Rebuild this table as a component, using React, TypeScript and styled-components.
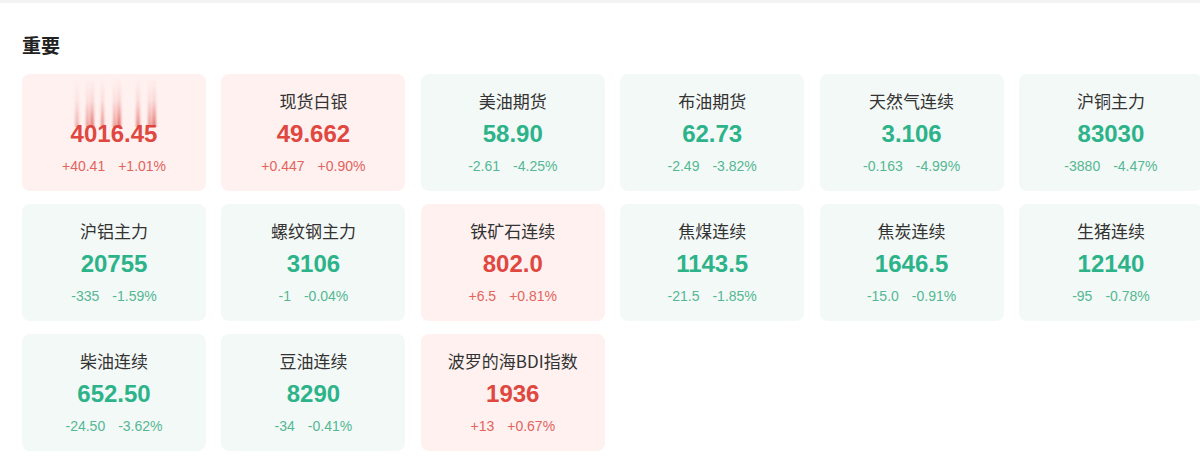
import React from "react";
import styled, { createGlobalStyle } from "styled-components";

const Global = createGlobalStyle`
  html, body { margin: 0; padding: 0; background: #fff; overflow: hidden; }
  body { font-family: "Liberation Sans", Arial, "Noto Sans CJK SC", sans-serif; }
`;

const Page = styled.div`
  width: 1200px;
  height: 462px;
  overflow: hidden;
  background: #fff;
`;

const TopBand = styled.div`
  height: 3px;
  background: #f3f3f3;
`;

const Section = styled.section`
  padding: 28px 0 0 22px;
`;

const Heading = styled.h2`
  margin: 0 0 15px;
  font-family: "Noto Sans CJK SC", sans-serif;
  font-size: 19px;
  line-height: 28px;
  font-weight: 700;
  color: #222;
`;

const Grid = styled.div`
  display: grid;
  grid-template-columns: repeat(6, 184px);
  column-gap: 15.4px;
  row-gap: 13px;
`;

const Card = styled.div<{ $up: boolean }>`
  position: relative;
  height: 117px;
  box-sizing: border-box;
  padding-top: 15px;
  border-radius: 8px;
  background: ${(p) => (p.$up ? "#fef1f0" : "#f3f9f6")};
  display: flex;
  flex-direction: column;
  align-items: center;
  overflow: hidden;
`;

const Name = styled.div<{ $hidden?: boolean }>`
  font-family: "Noto Sans CJK SC", sans-serif;
  font-size: 17px;
  line-height: 24px;
  color: #333;
  visibility: ${(p) => (p.$hidden ? "hidden" : "visible")};
`;

const Value = styled.div<{ $up: boolean }>`
  margin-top: 5px;
  font-family: "Liberation Sans", Arial, sans-serif;
  font-weight: 700;
  font-size: 24px;
  line-height: 32px;
  color: ${(p) => (p.$up ? "#e0473f" : "#2db38a")};
`;

const Change = styled.div<{ $up: boolean }>`
  margin-top: 5px;
  display: flex;
  gap: 13px;
  font-family: "Liberation Sans", Arial, sans-serif;
  font-size: 14px;
  line-height: 22px;
  color: ${(p) => (p.$up ? "#e2645d" : "#55b794")};
`;

const Rolling = styled.svg`
  position: absolute;
  left: 0;
  top: 0;
  pointer-events: none;
`;

type Item = { name: string; value: string; diff: string; pct: string; up: boolean };

const items: Item[] = [
  { name: "现货黄金", value: "4016.45", diff: "+40.41", pct: "+1.01%", up: true },
  { name: "现货白银", value: "49.662", diff: "+0.447", pct: "+0.90%", up: true },
  { name: "美油期货", value: "58.90", diff: "-2.61", pct: "-4.25%", up: false },
  { name: "布油期货", value: "62.73", diff: "-2.49", pct: "-3.82%", up: false },
  { name: "天然气连续", value: "3.106", diff: "-0.163", pct: "-4.99%", up: false },
  { name: "沪铜主力", value: "83030", diff: "-3880", pct: "-4.47%", up: false },
  { name: "沪铝主力", value: "20755", diff: "-335", pct: "-1.59%", up: false },
  { name: "螺纹钢主力", value: "3106", diff: "-1", pct: "-0.04%", up: false },
  { name: "铁矿石连续", value: "802.0", diff: "+6.5", pct: "+0.81%", up: true },
  { name: "焦煤连续", value: "1143.5", diff: "-21.5", pct: "-1.85%", up: false },
  { name: "焦炭连续", value: "1646.5", diff: "-15.0", pct: "-0.91%", up: false },
  { name: "生猪连续", value: "12140", diff: "-95", pct: "-0.78%", up: false },
  { name: "柴油连续", value: "652.50", diff: "-24.50", pct: "-3.62%", up: false },
  { name: "豆油连续", value: "8290", diff: "-34", pct: "-0.41%", up: false },
  { name: "波罗的海BDI指数", value: "1936", diff: "+13", pct: "+0.67%", up: true },
];

const stripes = [
  { x: 53, w: 4, o: 0.4 },
  { x: 64, w: 3, o: 0.6 },
  { x: 68, w: 4, o: 0.75 },
  { x: 79, w: 3, o: 0.65 },
  { x: 91, w: 3, o: 0.6 },
  { x: 95, w: 4, o: 0.8 },
  { x: 114, w: 4, o: 0.65 },
  { x: 126, w: 3, o: 0.65 },
  { x: 130, w: 4, o: 0.8 },
];

const RollingStripes = () => (
  <Rolling width="184" height="60" viewBox="0 0 184 60">
    <defs>
      <linearGradient id="roll" x1="0" y1="0" x2="0" y2="1">
        <stop offset="0" stopColor="#e0473f" stopOpacity="0" />
        <stop offset="0.45" stopColor="#e0473f" stopOpacity="0.2" />
        <stop offset="1" stopColor="#d8403a" stopOpacity="0.9" />
      </linearGradient>
      <filter id="blur" x="-60%" y="-10%" width="220%" height="120%">
        <feGaussianBlur stdDeviation="1 0.5" />
      </filter>
    </defs>
    <g filter="url(#blur)">
      {stripes.map((s, i) => (
        <rect key={i} x={s.x} y={5} width={s.w} height={48} fill="url(#roll)" opacity={s.o} />
      ))}
    </g>
  </Rolling>
);

export default function App() {
  return (
    <Page>
      <Global />
      <TopBand />
      <Section>
        <Heading>重要</Heading>
        <Grid>
          {items.map((it, i) => (
            <Card key={it.name} $up={it.up}>
              <Name $hidden={i === 0}>{it.name}</Name>
              <Value $up={it.up}>{it.value}</Value>
              <Change $up={it.up}>
                <span>{it.diff}</span>
                <span>{it.pct}</span>
              </Change>
              {i === 0 && <RollingStripes />}
            </Card>
          ))}
        </Grid>
      </Section>
    </Page>
  );
}
